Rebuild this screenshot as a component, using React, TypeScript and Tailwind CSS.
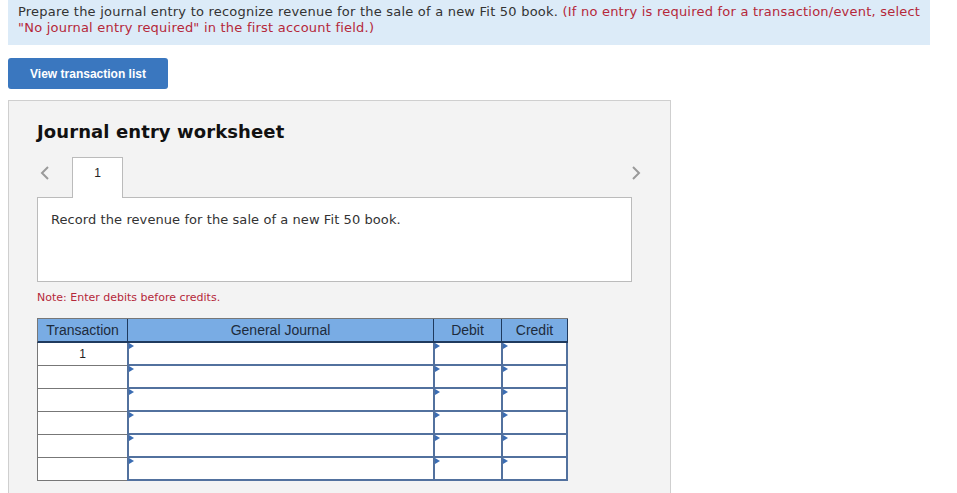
const rows = [1, 2, 3, 4, 5, 6]

function InputCell({ last }: { last?: boolean }) {
  return (
    <div
      className={`relative h-[23px] bg-white border-l-2 border-b-2 border-[#52719e] ${
        last ? 'border-r-2' : ''
      }`}
    >
      <span className="absolute left-0 top-0 h-0 w-0 border-y-[3px] border-l-[5px] border-y-transparent border-l-[#3b6db3]" />
    </div>
  )
}

function Chevron({ dir }: { dir: 'left' | 'right' }) {
  return (
    <svg width="10" height="16" viewBox="0 0 10 16" fill="none" stroke="#9a9a9a" strokeWidth="2">
      {dir === 'left' ? <path d="M8 2 L2 8 L8 14" /> : <path d="M2 2 L8 8 L2 14" />}
    </svg>
  )
}

export default function App() {
  return (
    <div className="h-[493px] w-[957px] overflow-hidden bg-white font-['DejaVu_Sans',Verdana,sans-serif] text-[#333]">
      {/* Instruction banner */}
      <div className="ml-2 w-[922px] bg-[#dcebf8] pb-[9px] pl-[10px] pt-1 text-[13px] leading-4 tracking-[0.22px]">
        Prepare the journal entry to recognize revenue for the sale of a new Fit 50 book.{' '}
        <span className="text-[#b5283a]">
          (If no entry is required for a transaction/event, select "No journal entry required" in the
          first account field.)
        </span>
      </div>

      <button className="ml-2 mt-[13px] flex h-[31px] w-[160px] items-center justify-center rounded-[3px] bg-[#3a77bf] font-['Liberation_Sans',Arial,sans-serif] text-[12px] font-bold text-white">
        View transaction list
      </button>

      {/* Worksheet panel */}
      <div className="ml-2 mt-[11px] h-[420px] w-[663px] border border-[#cfcfcf] bg-[#f3f3f3] pl-[28px] pt-[19px]">
        <h2 className="text-[18px] font-bold leading-6 tracking-[0.1px] text-[#111]">Journal entry worksheet</h2>

        <div className="mt-[13px] flex w-[604px] items-end">
          <span className="mb-[16px] ml-[3px] w-[32px]">
            <Chevron dir="left" />
          </span>
          <div className="relative z-10 -mb-px flex h-[41px] w-[51px] justify-center border border-b-0 border-[#bbb] bg-white pt-[6px] font-['Liberation_Sans',Arial,sans-serif] text-[12px] text-[#222]">
            1
          </div>
          <span className="mb-[16px] ml-auto">
            <Chevron dir="right" />
          </span>
        </div>

        <div className="h-[85px] w-[595px] border border-[#bbb] bg-white pl-[13px] pt-[14px] text-[13px] leading-4 tracking-[0.08px]">
          Record the revenue for the sale of a new Fit 50 book.
        </div>

        <p className="mt-[8px] text-[11px] leading-4 text-[#b5283a]">Note: Enter debits before credits.</p>

        {/* Journal table */}
        <div className="mt-[12px] w-[531px] font-['Liberation_Sans',Arial,sans-serif]">
          <div className="grid h-[25px] grid-cols-[90px_306px_68px_67px] border-t border-[#777] bg-[#79ace4] text-[14px] text-[#1d2b3c]">
            <div className="flex items-center justify-center border-b-2 border-l border-[#1f3a5e] border-l-[#777]">
              Transaction
            </div>
            <div className="flex items-center justify-center border-b-2 border-l border-[#1f3a5e]">
              General Journal
            </div>
            <div className="flex items-center justify-center border-b-2 border-l border-[#1f3a5e]">Debit</div>
            <div className="flex items-center justify-center border-b-2 border-l border-r border-[#1f3a5e]">
              Credit
            </div>
          </div>
          {rows.map((r) => (
            <div key={r} className="grid grid-cols-[90px_306px_68px_67px]">
              <div className="flex h-[23px] items-center justify-center border-b border-l border-[#777] bg-white text-[12px] text-[#222]">
                {r === 1 ? '1' : ''}
              </div>
              <InputCell />
              <InputCell />
              <InputCell last />
            </div>
          ))}
        </div>
      </div>
    </div>
  )
}
